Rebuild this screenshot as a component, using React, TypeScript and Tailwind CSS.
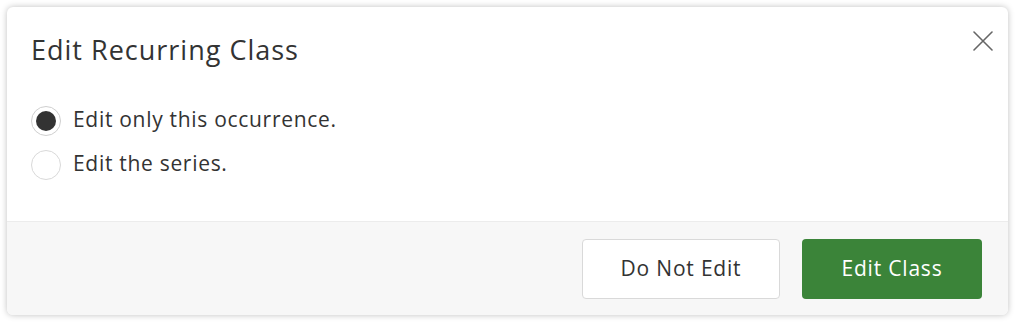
import React, { useState } from "react";

export default function App() {
  const [choice, setChoice] = useState<"one" | "series">("one");
  const font = { fontFamily: "'Open Sans', 'Noto Sans', sans-serif" };
  return (
    <div className="w-[1017px] h-[322px] bg-white p-[7px]" style={font}>
      <div className="w-[1001px] h-[308px] bg-white rounded-[6px] shadow-[0_0_6px_rgba(0,0,0,0.25)] flex flex-col overflow-hidden">
        <div className="relative flex-1 px-[24px] pt-[27px]">
          <h2 className="text-[27px] leading-[32px] tracking-[1px] text-[#333] font-normal">Edit Recurring Class</h2>
          <button className="absolute right-[15px] top-[24px] w-[20px] h-[20px] text-[#666]" aria-label="Close">
            <svg viewBox="0 0 20 20" width="20" height="20" fill="none" stroke="currentColor" strokeWidth="1.6" strokeLinecap="round">
              <path d="M1 1L19 19M19 1L1 19" />
            </svg>
          </button>
          <div className="mt-[40px] flex flex-col gap-[14px]">
            <label className="flex items-center gap-[12px] cursor-pointer" onClick={() => setChoice("one")}>
              <span className="w-[30px] h-[30px] rounded-full border border-[#cfcfcf] bg-white flex items-center justify-center">
                {choice === "one" && <span className="w-[20px] h-[20px] rounded-full bg-[#333]" />}
              </span>
              <span className="text-[21px] leading-[26px] pb-[4px] tracking-[0.7px] text-[#333]">Edit only this occurrence.</span>
            </label>
            <label className="flex items-center gap-[12px] cursor-pointer" onClick={() => setChoice("series")}>
              <span className="w-[30px] h-[30px] rounded-full border border-[#d9d9d9] bg-white flex items-center justify-center">
                {choice === "series" && <span className="w-[20px] h-[20px] rounded-full bg-[#333]" />}
              </span>
              <span className="text-[21px] leading-[26px] pb-[4px] tracking-[0.7px] text-[#333]">Edit the series.</span>
            </label>
          </div>
        </div>
        <div className="h-[94px] bg-[#f7f7f7] border-t border-[#ececec] flex items-center justify-end gap-[22px] pr-[26px]">
          <button className="w-[198px] h-[60px] bg-white border border-[#d9d9d9] rounded-[4px] text-[21px] tracking-[0.8px] text-[#333]">Do Not Edit</button>
          <button className="w-[180px] h-[60px] bg-[#3b8439] rounded-[4px] text-[21px] tracking-[0.8px] text-white">Edit Class</button>
        </div>
      </div>
    </div>
  );
}
